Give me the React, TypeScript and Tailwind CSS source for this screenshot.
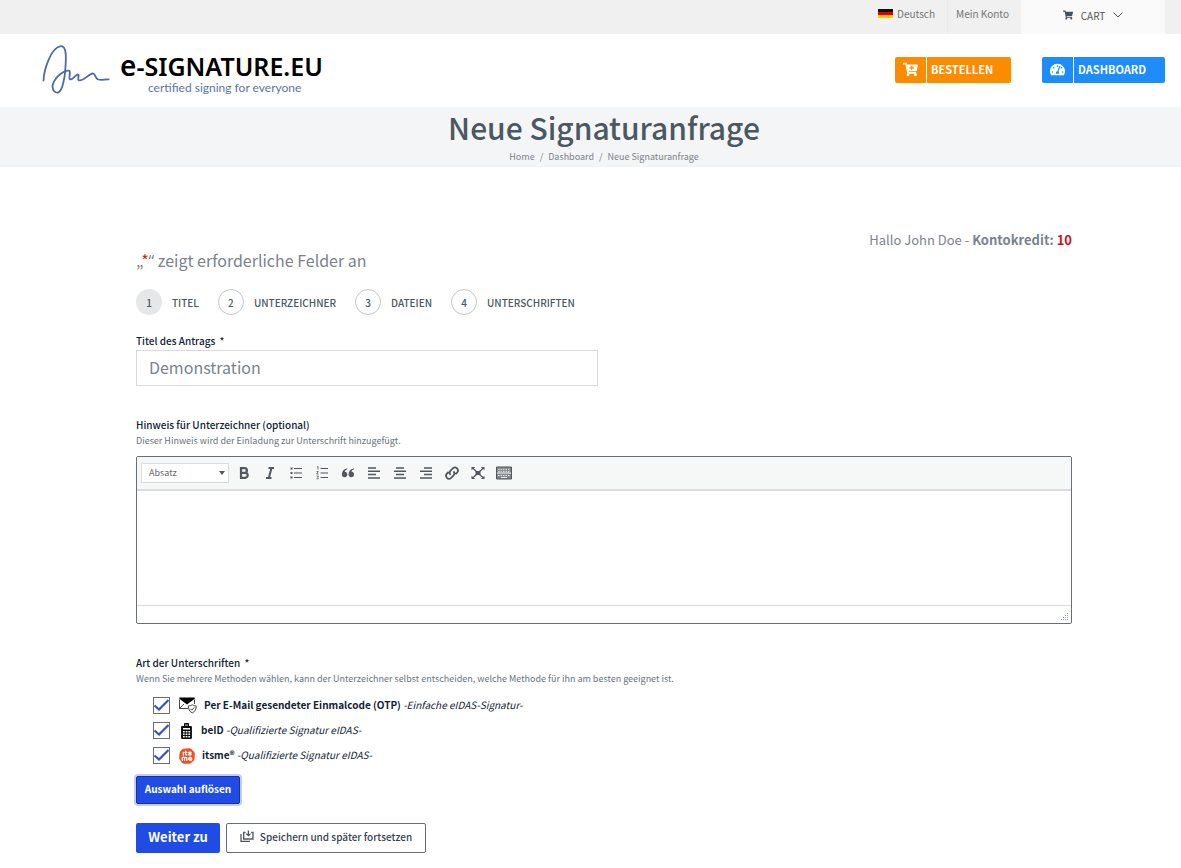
import { useState } from "react";
import type { ReactNode } from "react";
import { FaCartPlus, FaShoppingCart, FaTachometerAlt } from "react-icons/fa";

const steps = ["Titel", "Unterzeichner", "Dateien", "Unterschriften"];

const methods = [
  { id: "otp", name: "Per E-Mail gesendeter Einmalcode (OTP)", note: "-Einfache eIDAS-Signatur-", icon: <MailIcon /> },
  { id: "beid", name: "beID", note: "-Qualifizierte Signatur eIDAS-", icon: <ReaderIcon /> },
  { id: "itsme", name: "itsme®", note: "-Qualifizierte Signatur eIDAS-", icon: <ItsmeIcon /> },
];

function MailIcon() {
  return (
    <svg viewBox="0 0 18 17" className="h-[17px] w-[18px]" fill="none" stroke="#333" strokeWidth=".9">
      <path d="M.5 2.500v9h8.500M15.500 2.500V7M.5 11.500L5 7" />
      <path d="M.3.5h15.400v1.300L8 7.500.3 1.800z" fill="#000" stroke="none" />
      <path d="M13.300 7.700c1.300.9 2.400 1.200 3.900 1.200 0 3-.8 5.600-3.900 7-3.100-1.400-3.900-4-3.900-7 1.500 0 2.600-.3 3.900-1.200z" fill="#fff" />
      <path d="M11.300 11.700l1.500 1.500 2.600-2.900" />
    </svg>
  );
}

function ReaderIcon() {
  return (
    <svg viewBox="0 0 15 16" className="h-4 w-[15px]">
      <path d="M5 .8Q5 0 6 0h3q1 0 1 .8V3h2q.9 0 .9 1v11q0 1-.9 1H3q-.9 0-.9-1V4q0-1 .9-1h2z" fill="#0a0a0a" />
      <path d="M6 1.200h3V3H6z" fill="#777" />
      <path d="M4 5h7v1.500H4zM4 8h1.700v1.500H4zM6.700 8h1.700v1.500H6.700zM9.400 8h1.700v1.500H9.400zM4 10.500h1.700V12H4zM6.700 10.500h1.700V12H6.700zM9.400 10.500h1.700V12H9.400zM4 13h1.700v1.500H4zM6.700 13h1.700v1.500H6.700zM9.400 13h1.700v1.500H9.400z" fill="#fff" />
    </svg>
  );
}

function ItsmeIcon() {
  return (
    <svg viewBox="0 0 16 16" className="size-4">
      <path d="M4.500.8l6-.6q1-.1 1.800.7l2.900 3q.6.700.6 1.700l-.3 5.400q0 1-.8 1.700l-3 2.500q-.7.600-1.700.6l-5-.1q-1 0-1.700-.8L.7 11.600Q.1 11 .2 10L.6 5q.1-1 .8-1.700L3 1.500q.600-.6 1.500-.7z" fill="#f04e23" />
      <g fill="none" stroke="#fff" strokeWidth="1.300" strokeLinecap="round">
        <path d="M4.300 4.300v2.700M6.700 3.200v3q0 .8 1 .7M5.900 4.400h1.900M12 4.300q-2.300-.6-2.300.4 0 .7 1.100.8 1.400.2 1.200.9-.4.9-2.500.3" />
        <path d="M3.300 12.300V9.500q1.700-1 2.200.3v2.500M5.500 10q1.900-1.400 2.300 0v2.300M9.800 10.900h2.900q-.2-1.900-1.500-1.800-1.600.2-1.500 1.800.3 1.800 2.800 1.100" />
      </g>
    </svg>
  );
}

function Signature() {
  return (
    <svg viewBox="0 0 68 50" className="h-[50px] w-[68px]" fill="none" stroke="#4c6aa6" strokeWidth="1.800" strokeLinecap="round" strokeLinejoin="round">
      <path d="M1.500 35.500C2 24 9 2.500 19 1.200c6-.2 5 13 4.500 20.800-.5 10-3 25-7.800 25.700-4.700 0-6.500-5.700-4-10.700 2.500-5.500 11-12.500 15.600-11.300 2 1.500-1.300 7.500.7 8.600 2.500 1.200 5-4 7.700-5 2.300.2-.7 5 1 5.900 4 1.700 10-6 14-6.900 2.500 0 2.300 4.500 5 6 2.500 1.200 7 .5 11 0" />
    </svg>
  );
}

function Glyph({ children }: { children: ReactNode }) {
  return (
    <svg viewBox="0 0 16 16" className="size-4" fill="none" stroke="#50575e" strokeWidth="1.500">
      {children}
    </svg>
  );
}

const tools = [
  { label: "Fett", glyph: <path d="M5 3.200h3.600a2.200 2.200 0 0 1 0 4.600H5zM5 7.800h4.200a2.500 2.500 0 0 1 0 5H5z" strokeWidth="2.200" /> },
  { label: "Kursiv", glyph: <path d="M6.500 3H12M4 13h5.500M9.500 3L6.800 13" strokeWidth="2" /> },
  { label: "Aufzählung", glyph: <><path d="M6 3.500h8M6 8h8M6 12.500h8" strokeWidth="1" /><path d="M2.500 3.500h2M2.500 8h2M2.500 12.500h2" strokeWidth="2" /></> },
  { label: "Nummerierte Liste", glyph: <><path d="M6.500 3.500H14M6.500 8H14M6.500 12.500H14" strokeWidth="1" /><path d="M3 2l1-.5v3M2.500 6.500h1.700L2.700 9h1.800M2.500 11h1.800L3.500 12.300q1.300.3.700 1.500H2.500" strokeWidth=".8" /></> },
  { label: "Zitat", glyph: <path d="M7.300 3.200C3.500 4 1.900 6.500 1.900 9.600a2.700 2.700 0 1 0 2.900-2.800c.1-1.200.9-2.100 2.500-2.500zM14 3.200C10.200 4 8.600 6.500 8.600 9.600a2.700 2.700 0 1 0 2.900-2.800c.1-1.200.9-2.100 2.500-2.500z" fill="#50575e" stroke="none" /> },
  { label: "Linksbündig", glyph: <path d="M2 3h8M2 6.300h12M2 9.600h8M2 12.900h12" /> },
  { label: "Zentriert", glyph: <path d="M4 3h8M2 6.300h12M4 9.600h8M2 12.900h12" /> },
  { label: "Rechtsbündig", glyph: <path d="M6 3h8M2 6.300h12M6 9.600h8M2 12.900h12" /> },
  { label: "Link einfügen", glyph: <path d="M6.600 9.800a3 3 0 0 1 0-4.200l2.500-2.500a3 3 0 0 1 4.200 4.200l-1.900 1.900M9.400 6.400a3 3 0 0 1 0 4.200l-2.500 2.500a3 3 0 0 1-4.200-4.200L4.600 7" strokeWidth="1.800" /> },
  { label: "Vollbild", glyph: <><path d="M2.500 3l4 3.500M13.500 3l-4 3.500M2.500 13l4-3.500M13.500 13l-4-3.500" strokeWidth="1.200" /><path d="M1.500 2h3.800L1.500 5.200zM14.500 2h-3.800l3.800 3.200zM1.500 14h3.800l-3.800-3.200zM14.500 14h-3.800l3.800-3.200zM5.500 6h5v4h-5z" fill="#50575e" stroke="none" /></> },
  { label: "Werkzeugleiste umschalten", glyph: <><path d="M.5 2h15v12H.5z" fill="#83888d" strokeWidth="1" /><path d="M1 8h14" strokeWidth="1" stroke="#f6f7f7" /><path d="M2 4.300h12M2 6.300h12M2 10.500h12" stroke="#e4e6e7" strokeWidth="1" strokeDasharray="1.500 1" /><path d="M5 12.500h6" stroke="#e4e6e7" strokeWidth="1" /></> },
];

function FieldLabel({ children, htmlFor }: { children: ReactNode; htmlFor: string }) {
  return (
    <label htmlFor={htmlFor} className="block text-[10px] leading-4 font-medium text-[#112337]">
      {children}
    </label>
  );
}

export default function App() {
  const [title, setTitle] = useState("Demonstration");
  const [note, setNote] = useState("");
  const [selected, setSelected] = useState(methods.map((m) => m.id));

  const toggle = (id: string) =>
    setSelected((prev) => (prev.includes(id) ? prev.filter((s) => s !== id) : [...prev, id]));

  return (
    <div className="bg-white pb-4 font-['Noto_Sans_CJK_SC','Noto_Sans',sans-serif] text-[#7c828c]">
      <nav className="flex h-[34px] items-stretch justify-end bg-[#f0f0f0] pr-4 text-[10px] text-[#747474]">
        <a href="#" className="flex items-center gap-1 border-r border-[#eaeaea] pr-3 pb-2">
          <svg viewBox="0 0 15 9" className="h-[9px] w-[15px]">
            <path d="M0 0h15v3H0z" fill="#111" />
            <path d="M0 3h15v3H0z" fill="#d00" />
            <path d="M0 6h15v3H0z" fill="#ffce00" />
          </svg>
          Deutsch
        </a>
        <a href="#" className="flex items-center pr-3 pb-2 pl-2">Mein Konto</a>
        <a href="#" className="flex w-36 items-center justify-center bg-[#fafafa] pb-1 text-[#555]">
          <FaShoppingCart className="mr-2 size-2.5 text-[#47515c]" />
          CART
          <svg viewBox="0 0 10 6" className="ml-2 h-1.5 w-2.5" fill="none" stroke="#555">
            <path d="M.5.5L5 5 9.500.5" />
          </svg>
        </a>
      </nav>

      <header className="flex h-[73px] items-center justify-between pr-4 pb-0.5 pl-[42px]">
        <a href="#" className="flex items-center gap-2.5">
          <Signature />
          <span className="flex flex-col pt-1">
            <span className="font-['Noto_Sans',sans-serif] text-[25px] leading-8 font-semibold text-black">
              <span className="text-[28px]">e</span>-SIGNATURE.EU
            </span>
            <span className="pl-7 font-['Lato',sans-serif] text-xs leading-3 text-[#5a75a8]">
              certified signing for everyone
            </span>
          </span>
        </a>
        <div className="flex gap-[31px] text-[11px] font-bold text-white">
          <button type="button" className="flex h-[26px] w-[116px] items-center rounded-xs bg-[#fb8c00]">
            <span className="flex h-full w-8 items-center justify-center border-r border-white">
              <FaCartPlus className="size-[15px]" />
            </span>
            <span className="pl-1">BESTELLEN</span>
          </button>
          <button type="button" className="flex h-[26px] w-[123px] items-center rounded-xs bg-[#1e8cfa]">
            <span className="flex h-full w-8 items-center justify-center border-r border-white">
              <FaTachometerAlt className="size-[15px]" />
            </span>
            <span className="pl-1">DASHBOARD</span>
          </button>
        </div>
      </header>

      <div className="flex h-[60px] flex-col items-center bg-[#f3f5f6] pl-[27px]">
        <h1 className="text-[30px] leading-10 font-medium text-[#4b5761]">Neue Signaturanfrage</h1>
        <ol className="mt-0.5 flex gap-[5px] text-[9px] leading-4">
          <li><a href="#">Home</a></li>
          <li>/</li>
          <li><a href="#">Dashboard</a></li>
          <li>/</li>
          <li>Neue Signaturanfrage</li>
        </ol>
      </div>

      <main className="pt-16 pr-[109px] pl-[136px]">
        <p className="text-right text-[13px] leading-[18px]">
          Hallo John Doe - <strong>Kontokredit: <span className="text-[#d0111b]">10</span></strong>
        </p>
        <p className="text-base leading-[22px]">
          „<span className="text-[#c02b0a]">*</span>
          <span className="font-['Open_Sans',sans-serif]">“</span> zeigt erforderliche Felder an
        </p>

        <ol className="mt-[17px] flex gap-[19px] text-[10px] font-medium text-[#4b5761]">
          {steps.map((step, i) => (
            <li key={step} className="flex items-center gap-2.5">
              <span
                className={
                  i === 0
                    ? "flex size-[26px] items-center justify-center rounded-full bg-[#e6e7e9]"
                    : "flex size-[26px] items-center justify-center rounded-full border border-[#c4c6ca]"
                }
              >
                {i + 1}
              </span>
              <span className="uppercase">{step}</span>
            </li>
          ))}
        </ol>

        <form onSubmit={(e) => e.preventDefault()}>
          <div className="mt-[18px]">
            <FieldLabel htmlFor="title">
              Titel des Antrags <span className="ml-0.5">*</span>
            </FieldLabel>
            <input
              id="title"
              value={title}
              onChange={(e) => setTitle(e.target.value)}
              className="mt-px block h-9 w-[462px] border border-[#d8dadd] px-3 pb-0.5 text-base text-[#7c828c]"
            />
          </div>

          <div className="mt-[31px]">
            <FieldLabel htmlFor="note">Hinweis für Unterzeichner (optional)</FieldLabel>
            <p className="text-[9px] leading-4 text-[#6b7280]">Dieser Hinweis wird der Einladung zur Unterschrift hinzugefügt.</p>
            <div className="mt-[7px] rounded-xs border border-[#686e77]">
              <div className="flex h-[34px] items-center gap-[7px] border-b-2 border-[#dcdcde] bg-[#f6f7f7] px-1">
                <span className="relative flex items-center">
                  <select aria-label="Format" className="h-5 w-[88px] appearance-none border border-[#dcdcde] bg-white pl-[7px] text-[9px] text-[#646970]">
                    <option>Absatz</option>
                    <option>Überschrift 1</option>
                  </select>
                  <svg viewBox="0 0 6 4" className="pointer-events-none absolute right-1 h-1 w-1.5" fill="#50575e">
                    <path d="M0 0h6L3 4z" />
                  </svg>
                </span>
                <span className="flex gap-2.5">
                  {tools.map((tool) => (
                    <button key={tool.label} type="button" aria-label={tool.label}>
                      <Glyph>{tool.glyph}</Glyph>
                    </button>
                  ))}
                </span>
              </div>
              <textarea
                id="note"
                value={note}
                onChange={(e) => setNote(e.target.value)}
                className="block h-[114px] w-full resize-none p-3 outline-none"
              />
              <div className="flex h-[18px] items-end justify-end border-t border-[#dcdcde] p-0.5">
                <svg viewBox="0 0 8 8" className="size-2" fill="#9a9da3">
                  <path d="M6 0h1v1H6zM4 2h1v1H4zM6 2h1v1H6zM2 4h1v1H2zM4 4h1v1H4zM6 4h1v1H6zM0 6h1v1H0zM2 6h1v1H2zM4 6h1v1H4zM6 6h1v1H6z" />
                </svg>
              </div>
            </div>
          </div>

          <fieldset className="mt-[31px]">
            <legend className="text-[10px] leading-4 font-medium text-[#112337]">
              Art der Unterschriften <span className="ml-0.5">*</span>
            </legend>
            <p className="text-[9px] leading-4 text-[#6b7280]">
              Wenn Sie mehrere Methoden wählen, kann der Unterzeichner selbst entscheiden, welche Methode für ihn am besten geeignet ist.
            </p>
            <ul className="mt-1.5 pl-[17px]">
              {methods.map((m) => (
                <li key={m.id} className="flex h-[25px] items-center">
                  <span className="relative flex">
                    <input
                      id={m.id}
                      type="checkbox"
                      checked={selected.includes(m.id)}
                      onChange={() => toggle(m.id)}
                      className="peer size-[17px] appearance-none border border-[#686e77] bg-white"
                    />
                    <svg viewBox="0 0 17 17" className="pointer-events-none absolute hidden size-[17px] peer-checked:block" fill="none" stroke="#3a4fd0" strokeWidth="2.200">
                      <path d="M1.500 8.500l4.500 4 9.500-9.500" />
                    </svg>
                  </span>
                  <label htmlFor={m.id} className="flex items-center gap-[7px] pl-[9px] text-[10px] leading-4 text-[#112337]">
                    {m.icon}
                    <span className="pb-0.5">
                      <strong>{m.name}</strong> <em>{m.note}</em>
                    </span>
                  </label>
                </li>
              ))}
            </ul>
            <button
              type="button"
              onClick={() => setSelected(selected.length ? [] : methods.map((m) => m.id))}
              className="mt-2 h-7 w-[104px] rounded-xs border border-[#1a2f9c] bg-[#204ce5] pb-1 text-[10px] font-bold text-white ring-2 ring-[#c0cdf8]"
            >
              Auswahl auflösen
            </button>
          </fieldset>

          <div className="mt-[19px] flex gap-1.5">
            <button type="submit" className="h-[30px] w-[84px] rounded-xs bg-[#204ce5] pb-0.5 text-[13px] font-bold text-white">
              Weiter zu
            </button>
            <button type="button" className="flex h-[30px] w-[200px] items-center justify-center gap-1.5 rounded-xs border border-[#686e77] bg-white pb-1 text-[10px] font-medium text-[#394351]">
              <svg viewBox="0 0 14 12" className="h-3 w-3.5" fill="none" stroke="#50575e" strokeWidth="1.300">
                <path d="M1 4v7.300h9M5.500 2.500H3.700V9H13V2.500h-1.800M8.400.5v5M6.300 3.600l2.100 2 2.100-2" />
              </svg>
              Speichern und später fortsetzen
            </button>
          </div>
        </form>
      </main>
    </div>
  );
}
